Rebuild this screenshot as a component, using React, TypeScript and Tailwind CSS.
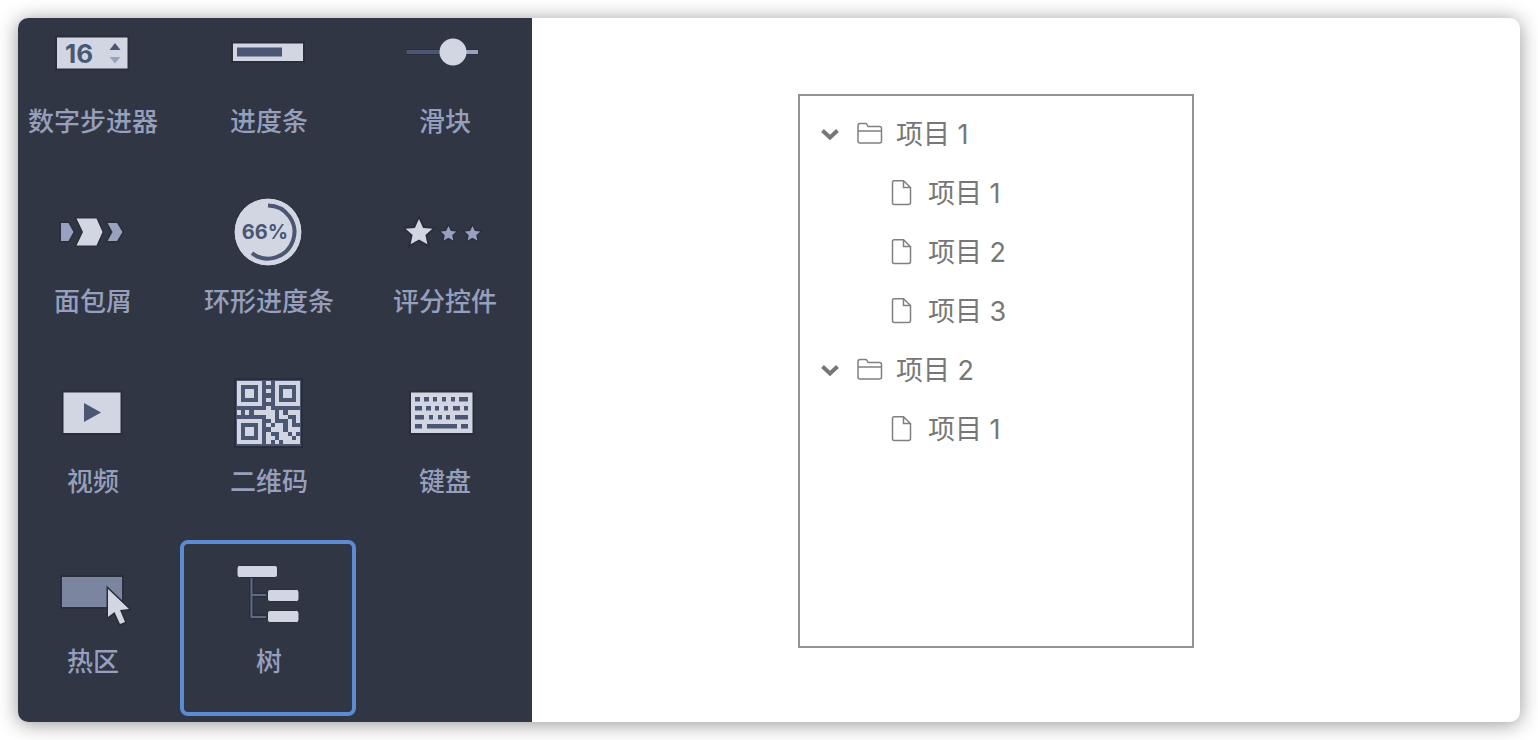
import { useState } from 'react';
import type { ReactNode } from 'react';

const LIGHT = '#d2d6e3';
const MID = '#98a1bf';
const INK = '#4b5672';
const EDGE = '#292e3a';

interface Widget {
  id: string;
  label: string;
  icon: ReactNode;
}

interface TreeItem {
  id: string;
  label: string;
  children?: TreeItem[];
}

// One char per module, '#' is a light module
const QR_ROWS = [
  '######.#.######',
  '#....#...#....#',
  '#.##.#.#.#.##.#',
  '#.##.#...#.##.#',
  '#....#.#.#....#',
  '######...######',
  '.......#.......',
  '#.#.#####.#.###',
  '.......##.##..#',
  '######..#...#.#',
  '#....#.#.##.#..',
  '#.##.#..###.###',
  '#.##.#.#..##.#.',
  '#....#.##.###.#',
  '######.#.#.####',
];

// Key rects as [x, width], one list per row
const KEY_ROWS = [
  [[11, 5], [20, 5], [29, 4], [38, 4], [47, 4], [55, 9]],
  [[11, 7], [22, 5], [31, 4], [40, 4], [49, 7], [60, 4]],
  [[11, 9], [25, 4], [34, 4], [42, 4], [51, 13]],
  [[11, 7], [23, 30], [57, 7]],
];

const STAR = 'M0 -14L4.1 -5L13.4 -4.3L6.4 2.1L8.4 11.3L0 6.6L-8.4 11.3L-6.4 2.1L-13.4 -4.3L-4.1 -5Z';

function Glyph({ children }: { children: ReactNode }) {
  return (
    <svg viewBox="0 0 80 80" className="h-20 w-20" aria-hidden="true">
      {children}
    </svg>
  );
}

const widgets: Widget[] = [
  {
    id: 'stepper',
    label: '数字步进器',
    icon: (
      <Glyph>
        <rect x="4" y="24.5" width="72.5" height="33" fill={LIGHT} stroke={EDGE} strokeWidth="2" />
        <text x="13" y="51" fontSize="26" className="font-['Inter',sans-serif] font-bold" fill={INK}>16</text>
        <path d="M57.5 38L63 31L68.5 38Z" fill={INK} />
        <path d="M57.5 45L63 51.5L68.5 45Z" fill={MID} />
      </Glyph>
    ),
  },
  {
    id: 'progress',
    label: '进度条',
    icon: (
      <Glyph>
        <rect x="4" y="30.5" width="72" height="19.5" fill={LIGHT} stroke={EDGE} strokeWidth="2" />
        <rect x="9" y="35.5" width="45" height="9" fill={INK} />
      </Glyph>
    ),
  },
  {
    id: 'slider',
    label: '滑块',
    icon: (
      <Glyph>
        <rect x="1.5" y="37" width="73" height="6" fill={EDGE} />
        <rect x="2.5" y="38" width="40" height="4" fill={INK} />
        <rect x="56" y="38" width="18" height="4" fill={MID} />
        <circle cx="49" cy="40" r="13.5" fill={LIGHT} />
      </Glyph>
    ),
  },
  {
    id: 'breadcrumb',
    label: '面包屑',
    icon: (
      <Glyph>
        <g stroke={EDGE} strokeWidth="3" style={{ paintOrder: 'stroke' }}>
          <path d="M9 31H16.5L21.5 40L16.5 49H9Z" fill={MID} />
          <path d="M24.5 26.5H44.5L50.5 40L44.5 53.5H24.5L31 40Z" fill={LIGHT} />
          <path d="M55.5 31H65L70.5 40L65 49H55.5L60.5 40Z" fill={MID} />
        </g>
      </Glyph>
    ),
  },
  {
    id: 'ring',
    label: '环形进度条',
    icon: (
      <Glyph>
        <circle cx="40" cy="40" r="34" fill={LIGHT} stroke={EDGE} />
        <path d="M40 13.5A26.5 26.5 0 1 1 24 61.2" fill="none" stroke={INK} strokeWidth="4" />
        <text x="37" y="46.5" fontSize="20" textAnchor="middle" className="font-['Inter',sans-serif] font-bold" fill={INK}>66%</text>
      </Glyph>
    ),
  },
  {
    id: 'rating',
    label: '评分控件',
    icon: (
      <Glyph>
        <g stroke={EDGE} strokeWidth="4" style={{ paintOrder: 'stroke' }}>
          <path d={STAR} transform="translate(15 41)" fill={LIGHT} />
          <path d={STAR} transform="translate(44.5 42) scale(.58)" fill={MID} />
          <path d={STAR} transform="translate(68.5 42) scale(.58)" fill={MID} />
        </g>
      </Glyph>
    ),
  },
  {
    id: 'video',
    label: '视频',
    icon: (
      <Glyph>
        <rect x="10.5" y="19.5" width="59" height="42.5" fill={LIGHT} stroke={EDGE} strokeWidth="2" />
        <path d="M32 31L49 40.5L32 50Z" fill={INK} />
      </Glyph>
    ),
  },
  {
    id: 'qrcode',
    label: '二维码',
    icon: (
      <Glyph>
        <rect x="7" y="7" width="67" height="68" fill={INK} stroke={EDGE} strokeWidth="2" />
        <g transform="translate(8.5 8.5) scale(4.25)" shapeRendering="crispEdges">
          {QR_ROWS.map((row, y) =>
            row.split('').map((c, x) =>
              c === '#' ? <rect key={`${x}-${y}`} x={x} y={y} width="1" height="1" fill={LIGHT} /> : null
            )
          )}
        </g>
      </Glyph>
    ),
  },
  {
    id: 'keyboard',
    label: '键盘',
    icon: (
      <Glyph>
        <rect x="6" y="19.5" width="63.5" height="42.5" fill={LIGHT} stroke={EDGE} strokeWidth="2" />
        {KEY_ROWS.map((row, i) =>
          row.map(([x, w]) => <rect key={`${i}-${x}`} x={x} y={25 + i * 9} width={w} height="4.5" fill={INK} />)
        )}
      </Glyph>
    ),
  },
  {
    id: 'hotspot',
    label: '热区',
    icon: (
      <Glyph>
        <rect x="9" y="24" width="62" height="32" fill="#7b859f" stroke={EDGE} strokeWidth="2" />
        <path
          d="M56 37L56 65L62.5 60L68 72L73 70L68 58L77 57Z"
          fill={LIGHT}
          stroke={EDGE}
          strokeWidth="3"
          style={{ paintOrder: 'stroke' }}
        />
      </Glyph>
    ),
  },
  {
    id: 'tree',
    label: '树',
    icon: (
      <Glyph>
        <path d="M23.5 26V65H38M23.5 43H38" fill="none" stroke={EDGE} strokeWidth="5" />
        <path d="M23.5 26V65H38M23.5 43H38" fill="none" stroke="#5f6986" strokeWidth="2" />
        <g fill={LIGHT} stroke={EDGE}>
          <rect x="9" y="13.5" width="40.5" height="12" rx="2.5" />
          <rect x="39.5" y="37.5" width="31.5" height="12" rx="2.5" />
          <rect x="39.5" y="58.5" width="31.5" height="12" rx="2.5" />
        </g>
      </Glyph>
    ),
  },
];

const treeItems: TreeItem[] = [
  {
    id: '1',
    label: '项目 1',
    children: [
      { id: '1-1', label: '项目 1' },
      { id: '1-2', label: '项目 2' },
      { id: '1-3', label: '项目 3' },
    ],
  },
  {
    id: '2',
    label: '项目 2',
    children: [{ id: '2-1', label: '项目 1' }],
  },
];

function FolderIcon() {
  return (
    <svg viewBox="0 0 28 28" className="h-7 w-7" fill="none" stroke="#808080" strokeWidth="1.5" aria-hidden="true">
      <path d="M2 20V5Q2 2.5 4 2.5H9.5Q10.5 2.5 11 3.5L12 5.5H23.5Q25.5 5.5 25.5 7.5V20Q25.5 22 23.5 22H4Q2 22 2 20ZM2 10H25.5" />
    </svg>
  );
}

function FileIcon() {
  return (
    <svg viewBox="0 0 24 28" className="h-7 w-6" fill="none" stroke="#808080" strokeWidth="1.5" aria-hidden="true">
      <path d="M4 0.8H13.5L20.5 7.5V22.5Q20.5 24.5 18.5 24.5H4Q2.5 24.5 2.5 22.5V2.5Q2.5 0.8 4 0.8ZM13.5 0.8V7.5H20.5" />
    </svg>
  );
}

function TreeFolder({ item }: { item: TreeItem }) {
  const [open, setOpen] = useState(true);

  return (
    <li>
      <button
        type="button"
        aria-expanded={open}
        onClick={() => setOpen(!open)}
        className="flex h-[59px] w-full items-center pl-5 text-left"
      >
        <svg
          viewBox="0 0 20 20"
          className={open ? 'mr-4 h-5 w-5' : 'mr-4 h-5 w-5 -rotate-90'}
          fill="none"
          stroke="#777"
          strokeWidth="4"
          aria-hidden="true"
        >
          <path d="M2.5 5.5L10 12.5L17.5 5.5" />
        </svg>
        <FolderIcon />
        <span className="ml-3">{item.label}</span>
      </button>
      {open && (
        <ul>
          {item.children?.map((child) => (
            <li key={child.id} className="flex h-[59px] items-center pl-[90px]">
              <FileIcon />
              <span className="ml-3.5">{child.label}</span>
            </li>
          ))}
        </ul>
      )}
    </li>
  );
}

export default function App() {
  const [selected, setSelected] = useState('tree');

  return (
    <div className="flex min-h-screen bg-white p-[18px] font-['Inter','Noto_Sans_CJK_SC',sans-serif]">
      <div className="flex flex-1 overflow-hidden rounded-[10px] bg-white shadow-[0_2px_20px_rgba(0,0,0,0.42)]">
        {/* Widget palette, scrolled so the first row and column are partly cut off */}
        <aside className="shrink-0 overflow-hidden bg-[#303644]">
          <div className="-mt-[18px] -ml-3.5 grid grid-cols-[repeat(3,176px)] gap-y-1 pb-1.5">
            {widgets.map((w) => (
              <button
                key={w.id}
                type="button"
                aria-pressed={selected === w.id}
                onClick={() => setSelected(w.id)}
                className={`flex h-44 flex-col items-center rounded-lg border-4 pt-2 ${
                  selected === w.id ? 'border-[#5b8cd3]' : 'border-transparent'
                }`}
              >
                {w.icon}
                <span className="mt-4 pl-0.5 text-[26px] leading-7 font-medium whitespace-nowrap text-[#969fbc]">{w.label}</span>
              </button>
            ))}
          </div>
        </aside>

        {/* Canvas */}
        <main className="flex-1 pt-[76px] pl-[266px]">
          <ul className="min-h-[554px] w-[396px] border-2 border-[#939393] pt-[9px] text-[27px] leading-8 text-[#777]">
            {treeItems.map((item) => (
              <TreeFolder key={item.id} item={item} />
            ))}
          </ul>
        </main>
      </div>
    </div>
  );
}
